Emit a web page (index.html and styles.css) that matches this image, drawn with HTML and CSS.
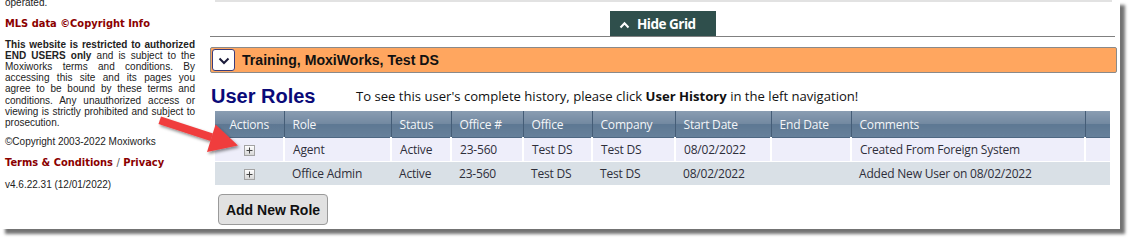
FILE: index.html
```html
<!DOCTYPE html>
<html>
<head>
<meta charset="utf-8">
<link rel="stylesheet" href="styles.css">
</head>
<body>
<div class="page">
<div class="frame">
  <aside class="sidebar">
    <div class="sb-line">operated.</div>
    <div class="sb-title">MLS data ©Copyright Info</div>
    <div class="sb-para">
      <span class="jl"><b>This website is restricted to authorized</b></span>
      <span class="jl"><b>END USERS only</b> and is subject to the</span>
      <span class="jl">Moxiworks terms and conditions. By</span>
      <span class="jl">accessing this site and its pages you</span>
      <span class="jl">agree to be bound by these terms and</span>
      <span class="jl">conditions. Any unauthorized access or</span>
      <span class="jl">viewing is strictly prohibited and subject to</span>
      <span class="jl-last">prosecution.</span>
    </div>
    <div class="sb-copy">©Copyright 2003-2022 Moxiworks</div>
    <div class="sb-links"><span>Terms &amp; Conditions</span> <span class="slash">/</span> <span>Privacy</span></div>
    <div class="sb-ver">v4.6.22.31 (12/01/2022)</div>
  </aside>
  <main class="main">
    <div class="top-rule"></div>
    <div class="tab-row">
      <div class="grid-tab">
        <svg class="tab-chev" width="11" height="8" viewBox="0 0 11 8"><polyline points="1.5,6.5 5.5,2.2 9.5,6.5" fill="none" stroke="#fff" stroke-width="2"/></svg>
        <span>Hide Grid</span>
      </div>
    </div>
    <div class="gray-rule"></div>
    <div class="org-bar">
      <span class="dd-btn"><svg width="12" height="8" viewBox="0 0 12 8"><polyline points="1.5,1.5 6,6 10.5,1.5" fill="none" stroke="#1b1b3a" stroke-width="2"/></svg></span>
      <span class="org-name">Training, MoxiWorks, Test DS</span>
    </div>
    <div class="head-row">
      <h1 class="title">User Roles</h1>
      <p class="intro">To see this user's complete history, please click <b>User History</b> in the left navigation!</p>
    </div>
    <table class="roles">
      <colgroup>
        <col class="c-act"><col class="c-role"><col class="c-status"><col class="c-offno"><col class="c-office"><col class="c-comp"><col class="c-start"><col class="c-end"><col class="c-comm"><col class="c-x">
      </colgroup>
      <thead>
        <tr><th class="ctr">Actions</th><th>Role</th><th>Status</th><th>Office #</th><th>Office</th><th>Company</th><th>Start Date</th><th>End Date</th><th>Comments</th><th></th></tr>
      </thead>
      <tbody>
        <tr class="r1">
          <td class="ctr"><span class="plus"><svg width="9" height="9" viewBox="0 0 9 9"><path d="M1.5 4.5h6M4.5 1.5v6" stroke="#444" stroke-width="1"/></svg></span></td>
          <td>Agent</td><td>Active</td><td>23-560</td><td>Test DS</td><td>Test DS</td><td>08/02/2022</td><td></td><td>Created From Foreign System</td><td></td>
        </tr>
        <tr class="r2">
          <td class="ctr"><span class="plus"><svg width="9" height="9" viewBox="0 0 9 9"><path d="M1.5 4.5h6M4.5 1.5v6" stroke="#444" stroke-width="1"/></svg></span></td>
          <td>Office Admin</td><td>Active</td><td>23-560</td><td>Test DS</td><td>Test DS</td><td>08/02/2022</td><td></td><td>Added New User on 08/02/2022</td><td></td>
        </tr>
      </tbody>
    </table>
    <button class="add-btn">Add New Role</button>
  </main>
  <svg class="arrow" width="100" height="60" viewBox="155 108 100 60">
    <defs>
      <filter id="sh" x="-20%" y="-20%" width="150%" height="160%">
        <feDropShadow dx="1.5" dy="2" stdDeviation="1.5" flood-color="#000" flood-opacity="0.45"/>
      </filter>
    </defs>
    <g filter="url(#sh)" fill="#f03e3e">
      <polygon points="161,116.5 213,133.5 210.5,141 158.5,124"/>
      <polygon points="215.5,124.5 238,145.5 207,152"/>
    </g>
  </svg>
</div>
</div>
</body>
</html>
```

FILE: styles.css
```css
html, body {
  margin: 0;
  padding: 0;
  background: #ffffff;
}

.page {
  height: 245px;
  overflow: hidden;
}

.frame {
  position: relative;
  width: 1120px;
  height: 229px;
  background: #ffffff;
  display: flex;
  box-shadow: 5px 5px 3px rgba(0, 0, 0, 0.55);
}

/* ---------- sidebar ---------- */
.sidebar {
  width: 190px;
  padding: 0 5px;
  flex: none;
  font-family: "Liberation Sans", Arial, sans-serif;
  font-size: 10px;
  line-height: 11.1px;
  color: #222;
  margin-top: -3px;
}

.sb-title {
  margin-top: 10px;
  font-family: "DejaVu Sans", Verdana, sans-serif;
  font-weight: bold;
  font-size: 9.9px;
  line-height: 12px;
  color: #8b0000;
}

.sb-para {
  margin-top: 9px;
}

.jl {
  display: block;
  text-align: justify;
  text-align-last: justify;
}

.jl-last {
  display: block;
}

.sb-copy {
  margin-top: 8px;
}

.sb-links {
  margin-top: 10px;
  font-family: "DejaVu Sans", Verdana, sans-serif;
  font-weight: bold;
  font-size: 9.9px;
  line-height: 12px;
  color: #8b0000;
}

.sb-links .slash {
  font-weight: normal;
  color: #555;
}

.sb-ver {
  margin-top: 10px;
}

/* ---------- main ---------- */
.main {
  flex: 1;
  padding-left: 10px;
  padding-right: 5px;
  display: flex;
  flex-direction: column;
  align-items: flex-start;
}

.top-rule {
  margin-left: 5px;
  width: 897px;
  height: 2px;
  background: #e2e2e2;
}

.tab-row {
  margin-top: 9px;
  padding-left: 400px;
}

.grid-tab {
  width: 106px;
  height: 25px;
  box-sizing: border-box;
  background: #2f4f4c;
  color: #fff;
  display: flex;
  align-items: center;
  padding-left: 9px;
  gap: 7px;
  font-family: "Open Sans", sans-serif;
  font-weight: bold;
  font-size: 13.5px;
  letter-spacing: -0.5px;
}

.tab-chev {
  margin-top: 2px;
}

.gray-rule {
  width: 905px;
  height: 1px;
  background: #808080;
}

.org-bar {
  margin-top: 10px;
  width: 907px;
  height: 26px;
  box-sizing: border-box;
  background: #ffa65f;
  border: 1px solid #8a8a8a;
  border-radius: 2px;
  display: flex;
  align-items: center;
  padding-left: 1px;
  gap: 7px;
}

.dd-btn {
  width: 23px;
  height: 22px;
  box-sizing: border-box;
  background: #fff;
  border: 1px solid #3b3b7a;
  border-radius: 3px;
  display: flex;
  align-items: center;
  justify-content: center;
}

.dd-btn svg {
  margin-top: 2px;
}

.org-name {
  font-family: "Liberation Sans", Arial, sans-serif;
  font-weight: bold;
  font-size: 14.1px;
  color: #111;
}

.head-row {
  margin-top: 10px;
  display: flex;
  align-items: center;
  height: 26px;
}

.title {
  margin: 0 0 0 1px;
  font-family: "Liberation Sans", Arial, sans-serif;
  font-weight: bold;
  font-size: 20px;
  color: #0a0a78;
  width: 145px;
}

.intro {
  margin: 0;
  font-family: "Open Sans", sans-serif;
  font-size: 13.1px;
  color: #111;
}

/* ---------- table ---------- */
.roles {
  margin-top: 2px;
  margin-left: 5px;
  width: 895px;
  table-layout: fixed;
  border-collapse: collapse;
  font-family: "Open Sans", sans-serif;
  font-size: 12px;
  letter-spacing: -0.2px;
}

.c-act { width: 69px; }
.c-role { width: 107px; }
.c-status { width: 60px; }
.c-offno { width: 72px; }
.c-office { width: 69px; }
.c-comp { width: 83px; }
.c-start { width: 96px; }
.c-end { width: 80px; }
.c-comm { width: 234px; }
.c-x { width: 25px; }

.roles th {
  height: 26px;
  padding: 0 0 0 8px;
  text-align: left;
  font-weight: normal;
  color: #f4f6f8;
  background: linear-gradient(#8a9db2 0%, #7389a1 48%, #5e7893 52%, #66809a 100%);
  border-right: 1px solid #455d77;
  border-bottom: 1px solid #4e6782;
}

.roles th:last-child {
  border-right: none;
}

.roles td {
  height: 23px;
  padding: 0 0 0 8px;
  color: #2e2e3a;
  white-space: nowrap;
}

.roles .ctr {
  text-align: center;
  padding: 0;
}

.r1 td {
  background: #eeeefa;
  border-right: 2px solid #ffffff;
  border-bottom: 1px solid #ffffff;
}

.r1 td:last-child {
  border-right: none;
}

.r2 td {
  background: #d9e0e6;
}

.plus {
  display: inline-block;
  width: 11px;
  height: 11px;
  box-sizing: border-box;
  border: 1px solid #a3a3a3;
  background: linear-gradient(#ffffff, #d6d6d6);
  vertical-align: middle;
  line-height: 0;
}

.plus svg {
  display: block;
}

.add-btn {
  margin-top: 9px;
  margin-left: 8px;
  width: 110px;
  height: 31px;
  background: #e1e1e1;
  border: 1px solid #9a9a9a;
  border-radius: 4px;
  font-family: "Liberation Sans", Arial, sans-serif;
  font-weight: bold;
  font-size: 14px;
  color: #111;
  padding: 0;
}

/* ---------- annotation arrow ---------- */
.arrow {
  position: absolute;
  left: 155px;
  top: 108px;
}
```
